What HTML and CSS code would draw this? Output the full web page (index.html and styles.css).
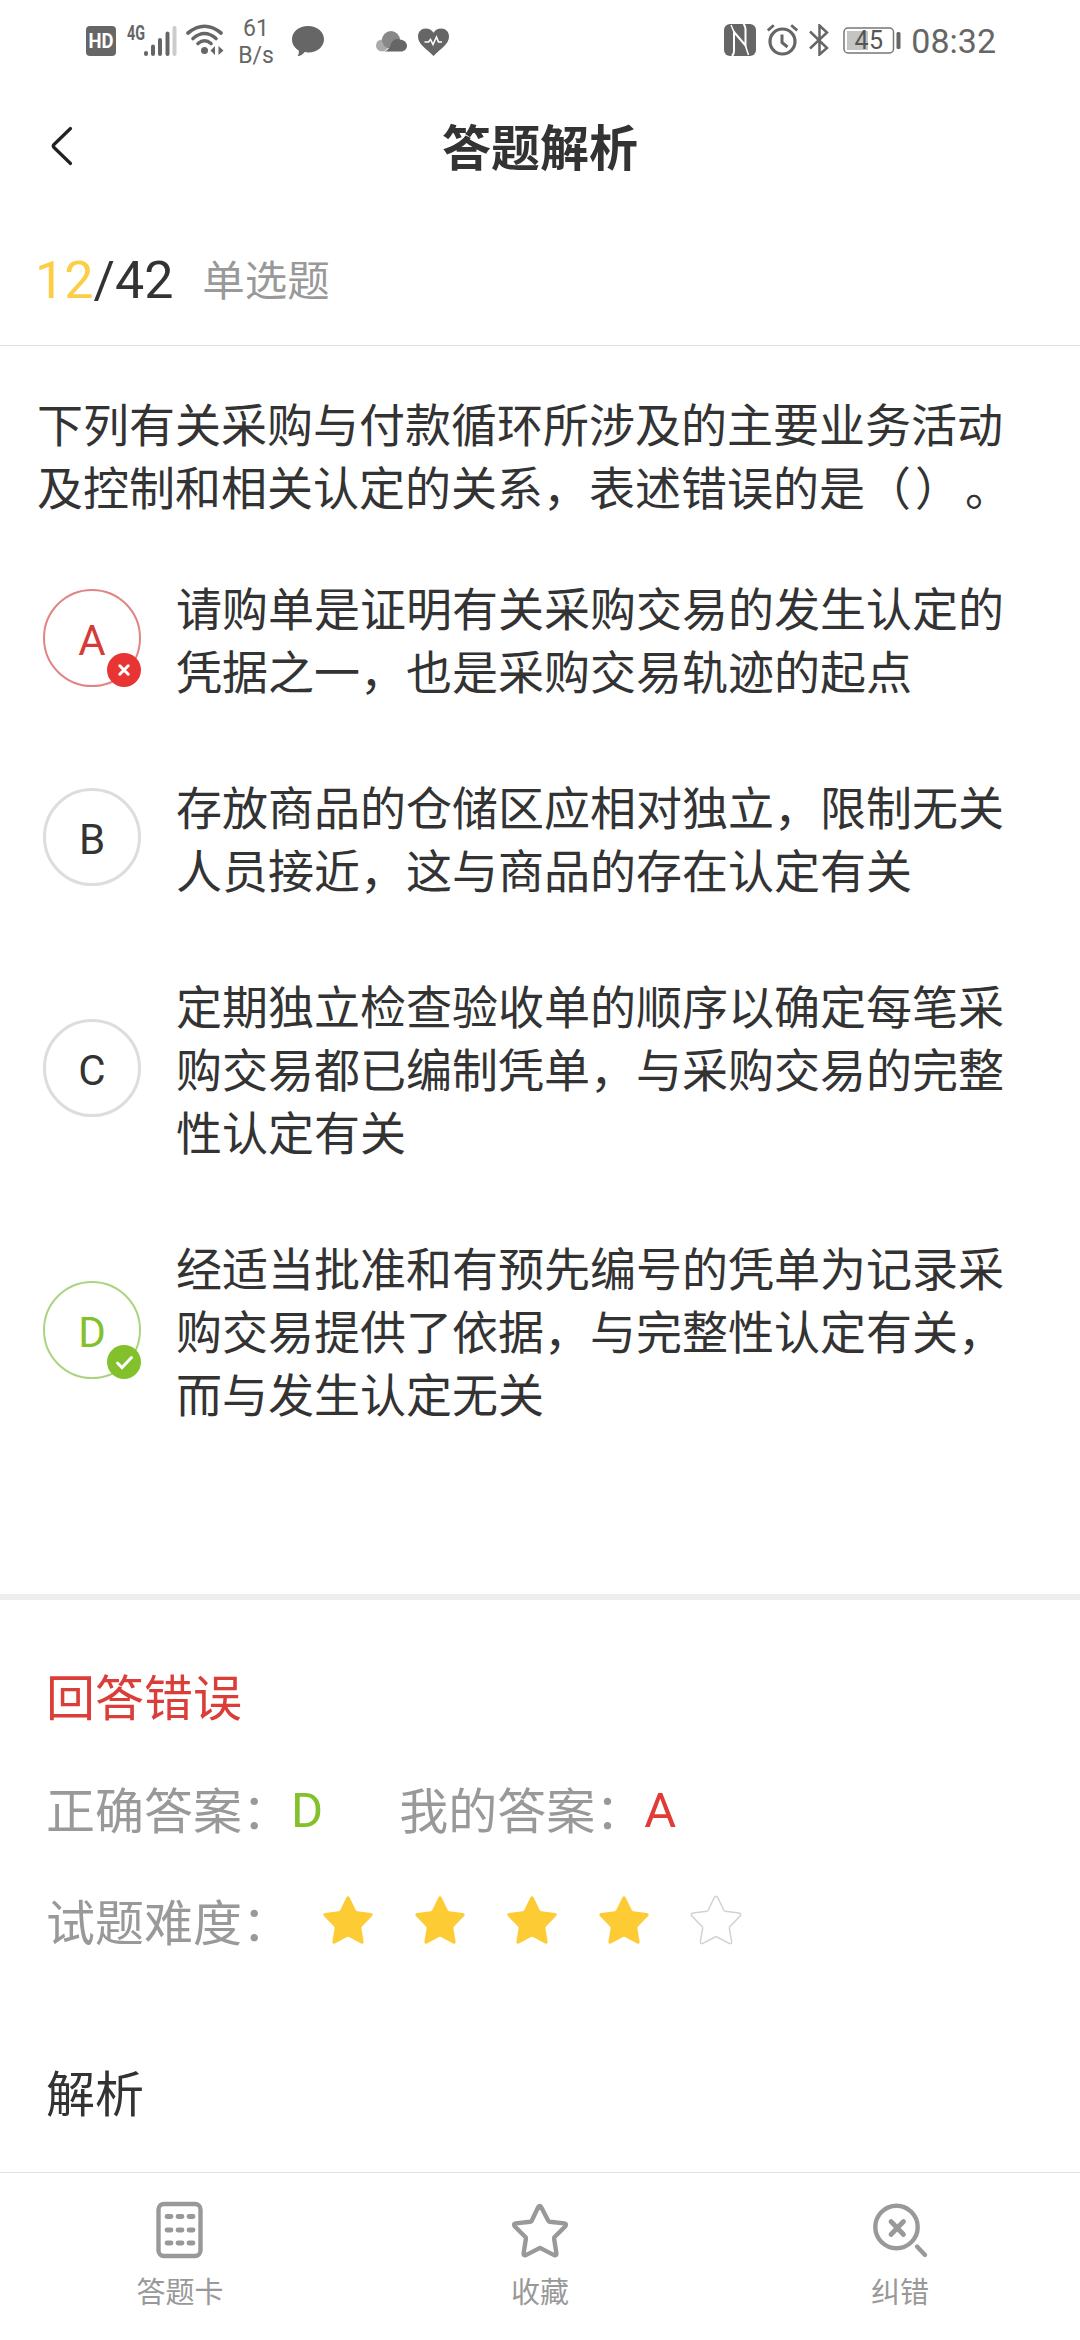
FILE: index.html
```
<!DOCTYPE html>
<html lang="zh-CN">
  <head>
    <meta charset="UTF-8" />
    <meta name="viewport" content="width=device-width, initial-scale=1.0" />
    <title>答题解析</title>
    <link rel="stylesheet" href="styles.css">
  </head>
  <body>
    <div class="page">
      <div class="status-bar">
        <div class="status-left">
          <svg class="icon-hd" width="30" height="30" viewBox="0 0 30 30">
            <rect width="30" height="30" rx="4" fill="#666" />
            <text x="2.5" y="22" textLength="25" lengthAdjust="spacingAndGlyphs" font-size="20" font-weight="700" fill="#fff">HD</text>
          </svg>
          <svg class="icon-signal" width="51" height="38" viewBox="0 -4 51 38">
            <text x="0" y="16" textLength="18" lengthAdjust="spacingAndGlyphs" font-size="20" font-weight="700" fill="#666">4G</text>
            <g stroke="#666" stroke-width="4" stroke-linecap="round">
              <path d="M19 29v1M26 22.500v7.500M33 16v14M40.500 9.500v20.500" />
              <path d="M47.500 4v26" stroke="#ccc" />
            </g>
          </svg>
          <svg class="icon-wifi" width="38" height="32" viewBox="0 0 38 32">
            <g fill="none" stroke="#666" stroke-width="3.600" stroke-linecap="round">
              <path d="M2 9Q18.500-4.500 35 9" />
              <path d="M7 14.500Q18.500 4.500 30 14.500" />
              <path d="M12 19.500Q18.500 14 25 19.500" />
            </g>
            <circle cx="18.500" cy="26.500" r="3.500" fill="#666" />
            <path d="M29 22v9l-4.500-4.500zM32.500 22v9l5-4.500z" fill="#666" />
          </svg>
          <div class="net-speed"><span>61</span><span>B/s</span></div>
          <svg class="icon-chat" width="32" height="31" viewBox="0 0 32 31">
            <path d="M16 0c9 0 16 5.800 16 13.300S25 26.500 16.500 26.500c-1.500 0-2.500 0-3.800-.4C11 28.500 9 30 5.500 30c1.200-1.500 1.700-3.500 1.200-5.500C2.500 22 0 18 0 13.300 0 5.800 7 0 16 0z" fill="#666" />
          </svg>
          <svg class="icon-cloud" width="31" height="21" viewBox="0 0 31 21">
            <circle cx="6" cy="14.500" r="6" fill="#aaa" />
            <circle cx="15" cy="9" r="9" fill="#888" />
            <path d="M8 20.500c4-1 6-4 7-7.500s5-6 9-4.500c4 .5 7 3 7 6.200 0 3.400-2.800 5.800-6 5.800z" fill="#666" />
          </svg>
          <svg class="icon-heart" width="31" height="28" viewBox="0 0 31 28">
            <path d="M15.500 28C8 20.500 0 16 0 8.500 0 3.500 3.500.5 7.700.5c3.300 0 6.200 1.500 7.800 4.200C17 2 20 .5 23.300.5 27.500.5 31 3.500 31 8.500 31 16 23 20.500 15.500 28z" fill="#666" />
            <path d="M6.500 14h4l2-2.500 2.500 5L18.500 9l2 5H24" fill="none" stroke="#fff" stroke-width="1.600" />
          </svg>
        </div>
        <div class="status-right">
          <svg class="icon-nfc" width="32" height="32" viewBox="0 0 32 32">
            <rect width="32" height="32" rx="6" fill="#666" />
            <path d="M8 32c1.500-1.500 2-3 2-5V8l11.500 13.500V5c0-2-.5-3.500-2-5" fill="none" stroke="#fff" stroke-width="2" />
            <path d="M7 1l3 7M24.500 31l-3-9" fill="none" stroke="#fff" stroke-width="1.500" />
          </svg>
          <svg class="icon-alarm" width="31" height="32" viewBox="0 0 31 32">
            <g fill="none" stroke="#666">
              <circle cx="15.500" cy="17.500" r="12.500" stroke-width="3.200" />
              <path d="M15 10.500v8l5.500 4.500" stroke-width="3" />
              <path d="M.8 6.500 6.800 1.200M30.200 6.500l-6-5.300" stroke-width="2.800" />
            </g>
          </svg>
          <svg class="icon-bluetooth" width="20" height="32" viewBox="0 0 20 32">
            <path d="M1 7.500 18 24l-7.500 6.500v-29L18 8.500 1 24.500" fill="none" stroke="#666" stroke-width="2.500" />
          </svg>
          <svg class="icon-battery" width="59" height="27" viewBox="0 0 59 27">
            <rect x="1" y="1" width="49.500" height="25" rx="4" fill="none" stroke="#777" stroke-width="1.500" />
            <rect x="4" y="4" width="21" height="19" fill="#c4c4c4" />
            <rect x="53.500" y="5" width="4" height="17" rx="1.500" fill="#666" />
            <text x="11.500" y="22" textLength="28.500" font-size="25" fill="#555">45</text>
          </svg>
          <span class="clock">08:32</span>
        </div>
      </div>

      <div class="nav-bar">
        <svg class="back" width="24" height="40" viewBox="0 0 24 40">
          <path d="M20.500 2.500 4 18.500q-1.500 1.500 0 3L20.500 37.500" fill="none" stroke="#222" stroke-width="3.200" stroke-linecap="round" />
        </svg>
        <h1>答题解析</h1>
      </div>

      <div class="progress">
        <div class="count"><span class="current">12</span>/42</div>
        <div class="type">单选题</div>
      </div>

      <div class="question">
        <p class="title">下列有关采购与付款循环所涉及的主要业务活动及控制和相关认定的关系，表述错误的是<span class="blank">（）</span>。</p>
        <ul class="options">
          <li>
            <div class="letter wrong">A
              <svg class="badge" width="34" height="34" viewBox="0 0 34 34">
                <circle cx="17" cy="17" r="17" fill="#e93434" />
                <path d="M12.800 12.800l8.400 8.400M21.200 12.800l-8.400 8.400" stroke="#fff" stroke-width="3" stroke-linecap="round" />
              </svg>
            </div>
            <p>请购单是证明有关采购交易的发生认定的凭据之一，也是采购交易轨迹的起点</p>
          </li>
          <li>
            <div class="letter">B</div>
            <p>存放商品的仓储区应相对独立，限制无关人员接近，这与商品的存在认定有关</p>
          </li>
          <li>
            <div class="letter">C</div>
            <p>定期独立检查验收单的顺序以确定每笔采购交易都已编制凭单，与采购交易的完整性认定有关</p>
          </li>
          <li>
            <div class="letter right">D
              <svg class="badge" width="34" height="34" viewBox="0 0 34 34">
                <circle cx="17" cy="17" r="17" fill="#82c02c" />
                <path d="M10.500 18l4.500 4.500 9.500-10" fill="none" stroke="#fff" stroke-width="3" stroke-linecap="round" />
              </svg>
            </div>
            <p>经适当批准和有预先编号的凭单为记录采购交易提供了依据，与完整性认定有关，而与发生认定无关</p>
          </li>
        </ul>
      </div>

      <div class="result">
        <div class="row error">回答错误</div>
        <div class="row">
          <span>正确答案：</span><span class="answer green">D</span>
          <span>我的答案：</span><span class="answer red">A</span>
        </div>
        <div class="row">
          <span>试题难度：</span>
          <div class="stars">
            <svg class="star on" viewBox="0 0 52 50"><use href="#star" /></svg>
            <svg class="star on" viewBox="0 0 52 50"><use href="#star" /></svg>
            <svg class="star on" viewBox="0 0 52 50"><use href="#star" /></svg>
            <svg class="star on" viewBox="0 0 52 50"><use href="#star" /></svg>
            <svg class="star" viewBox="0 0 52 50">
              <path id="star" d="M24.300 2.500q1.700-2.500 3.400 0l6 12.500q.5 1 1.600 1.200l13.500 1.700q3 .6 1.300 3.200L40 31.500q-.7.8-.6 1.800l2.200 13.200q.2 3-2.500 1.900L27 42q-1-.5-2 0l-12.100 6.400q-2.700 1.100-2.500-1.900l2.200-13.200q.1-1-.6-1.800L1.900 21.100q-1.700-2.600 1.300-3.200l13.500-1.700q1.100-.2 1.600-1.200z" />
            </svg>
          </div>
        </div>
        <h2>解析</h2>
      </div>

      <div class="tab-bar">
        <div class="tab">
          <svg width="58" height="58" viewBox="0 0 58 58" fill="none" stroke="#999">
            <rect x="7.500" y="3" width="42" height="52" rx="5.500" stroke-width="4.400" />
            <path d="M16 15.500h4M27 15.500h4M38 15.500h4M16 29h4M27 29h4M38 29h4M16 42h4M27 42h4M38 42h4" stroke-width="4.800" stroke-linecap="round" />
          </svg>
          <span>答题卡</span>
        </div>
        <div class="tab">
          <svg width="58" height="58" viewBox="0 0 58 58" fill="none" stroke="#999" stroke-width="4.400">
            <path d="M27.300 6q1.400-2 2.800 0l7.200 13.700q.5.900 1.500 1.100l14.500 1.600q2.600.6 1.100 2.800L43.600 36q-.6.700-.5 1.700l2.300 14.700q0 2.500-2.300 1.700L30 47.400q-1-.6-2 0l-13.100 6.700q-2.300.8-2.300-1.700l2.300-14.700q.1-1-.5-1.700L3.600 25.200q-1.500-2.200 1.100-2.800l14.500-1.600q1-.2 1.500-1.100z" stroke-linejoin="round" />
          </svg>
          <span>收藏</span>
        </div>
        <div class="tab">
          <svg width="58" height="58" viewBox="0 0 58 58" fill="none" stroke="#999" stroke-width="4.400" stroke-linecap="round">
            <circle cx="25.500" cy="26" r="21.200" />
            <path d="M20 20.500l12.500 13M32.500 20.500 20 33.500" stroke-width="4.800" />
            <path d="M46 45.500l8 8.500" />
          </svg>
          <span>纠错</span>
        </div>
      </div>
    </div>
  </body>
</html>
```

FILE: styles.css
```
* {
  box-sizing: border-box;
  margin: 0;
  padding: 0;
}
body {
  font-family: Roboto, "Noto Sans CJK SC", sans-serif;
  background-color: #fff;
  color: #333;
  text-spacing-trim: space-all;
}
svg {
  display: block;
  flex-shrink: 0;
}
.page {
  display: flex;
  flex-direction: column;
  width: 1080px;
  height: 2340px;
}

/* status bar */
.status-bar {
  display: flex;
  justify-content: space-between;
  height: 80px;
  padding: 0 84px 0 86px;
  color: #666;
}
.status-left,
.status-right {
  display: flex;
  align-items: center;
}
.icon-hd {
  margin: 2px 11px 0 0;
}
.icon-signal {
  margin: -2px 8px 0 0;
  overflow: visible;
}
.icon-wifi {
  margin-right: 14px;
}
.net-speed {
  display: flex;
  flex-direction: column;
  align-items: center;
  width: 36px;
  margin: 3px 18px 0 0;
  font-size: 23px;
  line-height: 27px;
}
.icon-chat {
  margin: 2px 52px 0 0;
}
.icon-cloud {
  margin: 2px 11px 0 0;
}
.icon-heart {
  margin-top: 3px;
}
.icon-nfc {
  margin-right: 11px;
}
.icon-alarm {
  margin-right: 11px;
}
.icon-bluetooth {
  margin-right: 14px;
}
.icon-battery {
  margin: 1px 9px 0 0;
}
.clock {
  padding-top: 2px;
  font-size: 34px;
}

/* header */
.nav-bar {
  display: grid;
  grid-template-columns: 1fr auto 1fr;
  align-items: center;
  height: 130px;
  padding: 0 50px;
}
.nav-bar h1 {
  font-family: "Noto Sans CJK SC", sans-serif;
  font-size: 49px;
  font-weight: 700;
  line-height: 70px;
}
.nav-bar .back {
  margin-top: 2px;
}
.progress {
  display: flex;
  align-items: center;
  gap: 29px;
  height: 136px;
  padding: 0 35px;
  border-bottom: 1px solid #e0e0e0;
}
.count {
  padding-top: 6px;
  font-size: 52px;
  line-height: 60px;
}
.current {
  color: #fbce46;
}
.type {
  color: #999;
  font-family: "Noto Sans CJK SC", sans-serif;
  font-size: 42.5px;
  line-height: 60px;
}

/* question */
.question {
  padding: 45px 0 170px 37px;
  border-bottom: 6px solid #eee;
  font-family: "Noto Sans CJK SC", sans-serif;
  font-size: 46px;
  line-height: 63px;
}
.question .title {
  width: 980px;
}
.blank {
  letter-spacing: 4px;
}
.options {
  display: flex;
  flex-direction: column;
  gap: 73px;
  margin-top: 58px;
  padding-left: 6px;
  list-style: none;
}
.options li {
  display: flex;
  align-items: center;
  gap: 35px;
}
.options p {
  width: 832px;
}
.letter {
  position: relative;
  flex-shrink: 0;
  width: 98px;
  height: 98px;
  padding-top: 3px;
  border: 3px solid #ddd;
  border-radius: 50%;
  font-family: Roboto, sans-serif;
  font-size: 42px;
  line-height: 92px;
  text-align: center;
}
.letter.wrong,
.letter.right {
  padding-top: 4px;
  border-width: 2px;
}
.wrong {
  border-color: #e08583;
  color: #d43c39;
}
.right {
  border-color: #abd482;
  color: #82c02c;
}
.badge {
  position: absolute;
  right: -2px;
  bottom: -2px;
}

/* result */
.result {
  padding: 39px 46px 0;
  font-family: "Noto Sans CJK SC", sans-serif;
  font-size: 49px;
}
.row {
  display: flex;
  align-items: center;
  height: 112.5px;
  color: #999;
  line-height: 72px;
}
.row.error {
  color: #db3d38;
}
.answer {
  padding-top: 6px;
  font-family: Roboto, sans-serif;
}
.green {
  margin-right: 76px;
  color: #82c02c;
}
.red {
  color: #e23a36;
}
.stars {
  display: flex;
  gap: 40px;
  margin-left: 31px;
}
.star {
  width: 52px;
  height: 50px;
  overflow: visible;
  fill: #fff;
  stroke: #d2d2d2;
  stroke-width: 1.5;
}
.star.on {
  fill: #fdcb34;
  stroke: none;
}
.result h2 {
  margin-top: 78px;
  font-size: 49px;
  font-weight: 400;
  line-height: 72px;
}

/* bottom tabs */
.tab-bar {
  display: grid;
  grid-template-columns: repeat(3, 1fr);
  height: 168px;
  margin-top: auto;
  padding-top: 28px;
  border-top: 1px solid #e0e0e0;
}
.tab {
  display: flex;
  flex-direction: column;
  align-items: center;
  gap: 9px;
  color: #999;
  font-family: "Noto Sans CJK SC", sans-serif;
  font-size: 29px;
  line-height: 44px;
}
```
